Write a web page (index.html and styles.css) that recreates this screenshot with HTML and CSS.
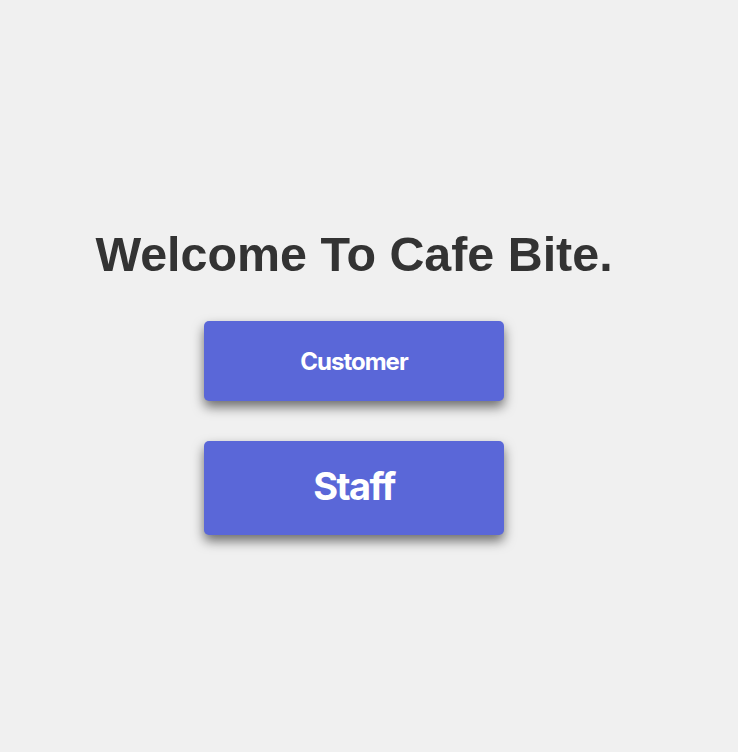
FILE: index.html
```html
<!DOCTYPE html>
<html>
<head>
<meta charset="utf-8">
<link rel="stylesheet" href="styles.css">
</head>
<body>
<main class="page">
  <h1 class="title">Welcome To Cafe Bite.</h1>
  <div class="actions">
    <button class="btn btn-customer">Customer</button>
    <button class="btn btn-staff">Staff</button>
  </div>
</main>
</body>
</html>
```

FILE: styles.css
```css
html, body {
  margin: 0;
  padding: 0;
  background: #f0f0f0;
}
.page {
  height: 752px;
  display: flex;
  flex-direction: column;
  align-items: center;
  padding-top: 226px;
  padding-right: 30px;
  box-sizing: border-box;
}
.title {
  margin: 0;
  font-family: "Liberation Sans", Arial, sans-serif;
  font-weight: bold;
  font-size: 48.4px;
  line-height: 56px;
  color: #333333;
}
.actions {
  display: flex;
  flex-direction: column;
  gap: 40px;
  margin-top: 39px;
}
.btn {
  width: 300px;
  border: none;
  border-radius: 5px;
  background: #5a67d8;
  color: #ffffff;
  font-family: "Inter", sans-serif;
  font-weight: 700;
  box-shadow: 0 6px 12px rgba(0, 0, 0, 0.55);
  padding: 0;
}
.btn-customer {
  height: 80px;
  font-size: 24px;
  letter-spacing: -1px;
}
.btn-staff {
  height: 94px;
  padding-bottom: 4px;
  font-size: 38px;
  letter-spacing: -1.6px;
}
```
